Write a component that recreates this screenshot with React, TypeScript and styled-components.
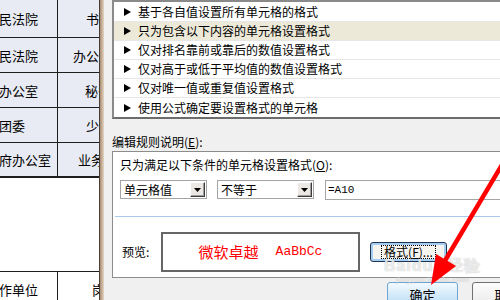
import React from "react";
import styled, { createGlobalStyle } from "styled-components";

const GlobalStyle = createGlobalStyle`
  html, body { margin: 0; padding: 0; background: #f0f0f0; }
  body { font-family: "Noto Sans CJK SC", "Noto Sans", sans-serif; }
`;

const Screen = styled.div`
  position: relative;
  display: flex;
  width: 500px;
  height: 300px;
  overflow: hidden;
`;

/* spreadsheet behind the dialog */
const Sheet = styled.div`
  width: 99px;
  flex-shrink: 0;
  display: flex;
  flex-direction: column;
  background: #fff;
  font-size: 13px;
  color: #000;
`;

const Row = styled.div<{ $h: number; $fill?: boolean; $thick?: boolean }>`
  display: flex;
  flex-shrink: 0;
  height: ${(p) => p.$h}px;
  box-sizing: border-box;
  border-bottom: ${(p) => (p.$thick ? 2 : 1)}px solid #1e1e1e;
  background: ${(p) => (p.$fill ? "#e8ebf4" : "#fff")};
`;

const NameCell = styled.div`
  width: 58px;
  flex-shrink: 0;
  box-sizing: border-box;
  border-right: 1px solid #1e1e1e;
  overflow: hidden;
  display: flex;
  align-items: center;
`;

const NameText = styled.div`
  width: 24px;
  flex-shrink: 0;
  display: flex;
  justify-content: center;
  white-space: nowrap;
`;

const DutyCell = styled.div<{ $indent: number }>`
  flex: 1;
  overflow: hidden;
  display: flex;
  align-items: center;
  white-space: nowrap;
  padding-left: ${(p) => p.$indent}px;
`;

const Frame = styled.div`
  width: 5px;
  flex-shrink: 0;
  background: linear-gradient(
    to right,
    #4a3e34 0,
    #4a3e34 1px,
    #a68c74 1px,
    #c9b29a 3px,
    #e2d6c8 5px
  );
`;

/* conditional formatting dialog */
const Dialog = styled.div`
  flex: 1;
  min-width: 0;
  display: flex;
  flex-direction: column;
  background: #f0f0f0;
  padding-left: 8px;
  font-size: 12px;
  line-height: 14px;
  color: #000;
`;

const ListBox = styled.div`
  height: 119px;
  box-sizing: border-box;
  margin-right: -12px;
  padding-top: 1px;
  background: #fff;
  border: 2px solid;
  border-color: #8a8a8a #8a8a8a #6c6c6c #8a8a8a;
  display: flex;
  flex-direction: column;
  flex-shrink: 0;
`;

const RuleItem = styled.div<{ $active?: boolean }>`
  height: 19px;
  box-sizing: border-box;
  border-bottom: 1px solid #e6e6e6;
  background: ${(p) => (p.$active ? "#ece9d8" : "#fff")};
  display: flex;
  align-items: center;
  padding-left: 10px;
  gap: 7px;
  white-space: nowrap;
  &:last-child {
    border-bottom: none;
  }
`;

const SectionLabel = styled.div`
  height: 32px;
  flex-shrink: 0;
  display: flex;
  align-items: flex-end;
  padding-bottom: 2px;
  box-sizing: border-box;
`;

const Key = styled.span`
  text-decoration: underline;
`;

const Panel = styled.div`
  height: 127px;
  flex-shrink: 0;
  box-sizing: border-box;
  margin-right: -12px;
  background: #fff;
  border-top: 1px solid #8c8c8c;
  border-left: 1px solid #8c8c8c;
  border-bottom: 1px solid #8c8c8c;
  padding-left: 7px;
  display: flex;
  flex-direction: column;
`;

const ConditionLabel = styled.div`
  margin-top: 6px;
  white-space: nowrap;
`;

const ControlRow = styled.div`
  margin-top: 8px;
  display: flex;
  gap: 10px;
`;

const Select = styled.div<{ $w: number }>`
  width: ${(p) => p.$w}px;
  height: 19px;
  box-sizing: border-box;
  border: 1px solid #a5a5a5;
  background: #fff;
  display: flex;
  align-items: center;
  justify-content: space-between;
  padding: 0 1px 0 3px;
  white-space: nowrap;
`;

const DropButton = styled.div`
  width: 15px;
  height: 15px;
  box-sizing: border-box;
  background: #ece9e4;
  border: 1px solid;
  border-color: #fff #3c3c3c #3c3c3c #fff;
  box-shadow: inset -1px -1px 0 #a0a0a0;
  display: flex;
  align-items: center;
  justify-content: center;
`;

const FormulaInput = styled.div`
  flex: 1;
  margin-left: 1px;
  height: 20px;
  box-sizing: border-box;
  border: 1px solid #a5a5a5;
  border-right: none;
  display: flex;
  align-items: center;
  padding-left: 2px;
  font-family: "Liberation Mono", monospace;
  font-size: 11px;
`;

const Divider = styled.div`
  margin: 16px 0 0 -5px;
  height: 1px;
  background: #a9c9ee;
`;

const PreviewRow = styled.div`
  margin-top: 15px;
  display: flex;
  align-items: center;
`;

const PreviewLabel = styled.div`
  width: 41px;
  padding-left: 2px;
  box-sizing: border-box;
`;

const PreviewBox = styled.div`
  width: 199px;
  height: 40px;
  box-sizing: border-box;
  border: 2px solid #666;
  display: flex;
  align-items: center;
  justify-content: center;
  gap: 17px;
  color: #ff0000;
  white-space: nowrap;
`;

const PreviewCjk = styled.span`
  font-size: 15px;
`;

const PreviewLatin = styled.span`
  font-family: "Liberation Mono", monospace;
  font-size: 13px;
`;

const FormatButton = styled.div`
  margin-left: 10px;
  width: 77px;
  height: 20px;
  box-sizing: border-box;
  border: 1px solid #1c3550;
  border-radius: 3px;
  background: #f5f4ef;
  box-shadow: inset 0 0 0 2px #a6cdf2;
  display: flex;
  align-items: center;
  justify-content: center;
`;

const FocusRing = styled.span`
  border: 1px dotted #000;
  padding: 0 2px;
  line-height: 12px;
  white-space: nowrap;
`;

const Footer = styled.div`
  flex: 1;
  display: flex;
  justify-content: flex-end;
  gap: 14px;
  margin-right: -43px;
  padding-top: 4px;
`;

const DialogButton = styled.div<{ $primary?: boolean }>`
  width: 71px;
  height: 22px;
  box-sizing: border-box;
  border-radius: 3px;
  border: 1px solid ${(p) => (p.$primary ? "#6ea6d4" : "#707070")};
  background: ${(p) =>
    p.$primary
      ? "linear-gradient(#f4faff, #d6ebfa 55%, #bfdff6)"
      : "linear-gradient(#fcfcfc, #ececec)"};
  display: flex;
  align-items: center;
  justify-content: center;
  padding-top: 4px;
  font-size: 13px;
`;

/* overlays */
const Watermark = styled.div`
  position: absolute;
  left: 384px;
  top: 257px;
  display: flex;
  flex-direction: column;
  align-items: center;
  color: rgba(255, 255, 255, 0.75);
  text-shadow: 0 0 1px rgba(120, 120, 120, 0.6);
  pointer-events: none;
`;

const MarkTitle = styled.div`
  display: flex;
  align-items: center;
  font-family: "Liberation Sans", Arial, sans-serif;
  font-weight: bold;
  font-size: 16px;
  line-height: 18px;
  letter-spacing: 1px;
`;

const MarkUrl = styled.div`
  font-family: "Liberation Sans", Arial, sans-serif;
  font-size: 8px;
  line-height: 9px;
  letter-spacing: 0.5px;
`;

const ArrowLayer = styled.svg`
  position: absolute;
  left: 0;
  top: 0;
  pointer-events: none;
`;

const Triangle = () => (
  <svg width="7" height="8" viewBox="0 0 7 8">
    <polygon points="0,0 7,4 0,8" fill="#000" />
  </svg>
);

const DownCaret = () => (
  <svg width="7" height="4" viewBox="0 0 7 4">
    <polygon points="0,0 7,0 3.5,4" fill="#000" />
  </svg>
);

const rows = [
  { name: "人民法院", duty: "书记", indent: 28, h: 38 },
  { name: "人民法院", duty: "办公室", indent: 15, h: 35 },
  { name: "市办公室", duty: "秘书", indent: 27, h: 35 },
  { name: "团委", duty: "少先队", indent: 28, h: 35 },
  { name: "市政府办公室", duty: "业务科", indent: 20, h: 35 },
];

const rules = [
  "基于各自值设置所有单元格的格式",
  "只为包含以下内容的单元格设置格式",
  "仅对排名靠前或靠后的数值设置格式",
  "仅对高于或低于平均值的数值设置格式",
  "仅对唯一值或重复值设置格式",
  "使用公式确定要设置格式的单元格",
];

export default function App() {
  return (
    <>
      <GlobalStyle />
      <Screen>
        <Sheet>
          {rows.map((r, i) => (
            <Row key={i} $h={r.h} $fill $thick={i === rows.length - 1}>
              <NameCell>
                <NameText>{r.name}</NameText>
              </NameCell>
              <DutyCell $indent={r.indent}>{r.duty}</DutyCell>
            </Row>
          ))}
          <Row $h={94} />
          <Row $h={35}>
            <NameCell>
              <NameText>工作单位</NameText>
            </NameCell>
            <DutyCell $indent={34}>岗位</DutyCell>
          </Row>
        </Sheet>
        <Frame />
        <Dialog>
          <ListBox>
            {rules.map((t, i) => (
              <RuleItem key={t} $active={i === 1}>
                <Triangle />
                {t}
              </RuleItem>
            ))}
          </ListBox>
          <SectionLabel>
            编辑规则说明(<Key>E</Key>):
          </SectionLabel>
          <Panel>
            <ConditionLabel>
              只为满足以下条件的单元格设置格式(<Key>O</Key>):
            </ConditionLabel>
            <ControlRow>
              <Select $w={87}>
                单元格值
                <DropButton>
                  <DownCaret />
                </DropButton>
              </Select>
              <Select $w={97}>
                不等于
                <DropButton>
                  <DownCaret />
                </DropButton>
              </Select>
              <FormulaInput>=A10</FormulaInput>
            </ControlRow>
            <Divider />
            <PreviewRow>
              <PreviewLabel>预览:</PreviewLabel>
              <PreviewBox>
                <PreviewCjk>微软卓越</PreviewCjk>
                <PreviewLatin>AaBbCc</PreviewLatin>
              </PreviewBox>
              <FormatButton>
                <FocusRing>
                  格式(<Key>F</Key>)...
                </FocusRing>
              </FormatButton>
            </PreviewRow>
          </Panel>
          <Footer>
            <DialogButton $primary>确定</DialogButton>
            <DialogButton>取消</DialogButton>
          </Footer>
        </Dialog>

        <Watermark>
          <MarkTitle>
            Baidu
            <svg width="14" height="14" viewBox="0 0 16 16">
              <g fill="rgba(255,255,255,0.75)" stroke="rgba(120,120,120,0.5)" strokeWidth="0.6">
                <ellipse cx="4" cy="5" rx="1.8" ry="2.3" />
                <ellipse cx="8" cy="3" rx="1.8" ry="2.3" />
                <ellipse cx="12" cy="5" rx="1.8" ry="2.3" />
                <path d="M8 7 C5 7 3 11 4 13 C5 15 11 15 12 13 C13 11 11 7 8 7 Z" />
              </g>
            </svg>
            经验
          </MarkTitle>
          <MarkUrl>jingyan.baidu.com</MarkUrl>
        </Watermark>

        <ArrowLayer width="500" height="300" viewBox="0 0 500 300">
          <line x1="506" y1="158" x2="443" y2="264" stroke="#ff0000" strokeWidth="4.5" />
          <polygon points="431,285 436,254 456,266" fill="#ff0000" />
        </ArrowLayer>
      </Screen>
    </>
  );
}
